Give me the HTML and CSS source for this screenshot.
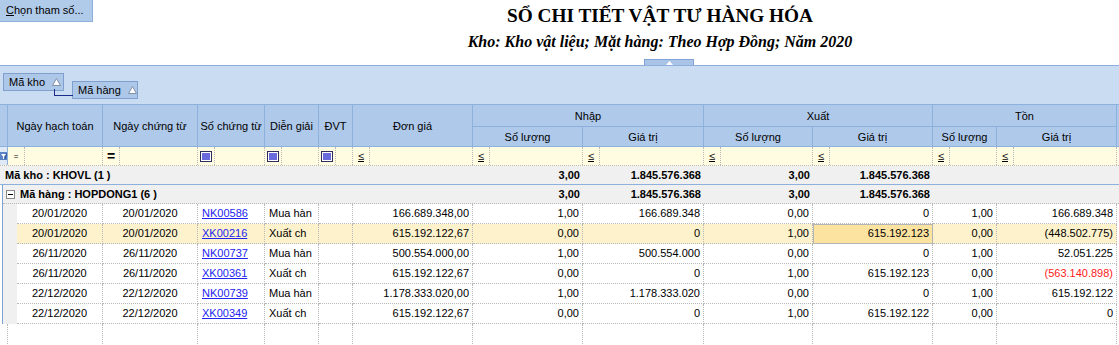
FILE: index.html
```html
<!DOCTYPE html>
<html lang="vi">
<head>
<meta charset="utf-8">
<title>Sổ chi tiết vật tư hàng hóa</title>
<link rel="stylesheet" href="styles.css">
</head>
<body>
<div class="top">
  <button class="btn-param"><u>C</u>họn tham số...</button>
  <div class="titles">
    <div class="title">SỔ CHI TIẾT VẬT TƯ HÀNG HÓA</div>
    <div class="subtitle">Kho: Kho vật liệu; Mặt hàng: Theo Hợp Đồng; Năm 2020</div>
  </div>
</div>
<div class="splitter-row">
  <div class="splitter"><svg width="7" height="4" viewBox="0 0 7 4"><polygon points="3.5,0 7,4 0,4" fill="#ffffff"/></svg></div>
</div>
<div class="group-panel">
  <div class="gbox gbox-kho">Mã kho <svg class="tri" width="9" height="8" viewBox="0 0 9 8"><polygon points="4.5,0.5 8.5,7.5 0.5,7.5" fill="#ffffff" stroke="#8090a8"/></svg></div>
  <div class="gbox gbox-hang">Mã hàng <svg class="tri" width="9" height="8" viewBox="0 0 9 8"><polygon points="4.5,0.5 8.5,7.5 0.5,7.5" fill="#ffffff" stroke="#8090a8"/></svg></div>
</div>
<div class="grid">
  <div class="header">
    <div class="hc span-r"></div>
    <div class="hc span-r">Ngày hạch toán</div>
    <div class="hc span-r">Ngày chứng từ</div>
    <div class="hc span-r">Số chứng từ</div>
    <div class="hc span-r">Diễn giải</div>
    <div class="hc span-r">ĐVT</div>
    <div class="hc span-r">Đơn giá</div>
    <div class="hc span-c">Nhập</div>
    <div class="hc span-c">Xuất</div>
    <div class="hc span-c">Tồn</div>
    <div class="hc span-r hc-rest"></div>
    <div class="hc">Số lượng</div>
    <div class="hc">Giá trị</div>
    <div class="hc">Số lượng</div>
    <div class="hc">Giá trị</div>
    <div class="hc">Số lượng</div>
    <div class="hc">Giá trị</div>
  </div>
  <div class="filter">
    <div class="fc f-ind"><svg width="7" height="10" viewBox="0 0 7 10"><rect x="0" y="1" width="7" height="8" fill="#5a83c6"/><path d="M1 3 L6 3 L4 5.5 L4 8 L3 8 L3 5.5 Z" fill="#ffffff"/><path d="M5 8 L7 2" stroke="#2c4f8f" stroke-width="1"/></svg></div>
    <div class="fc w1"><span class="op op-small">=</span></div>
    <div class="fc w2"><span class="op op-big">=</span></div>
    <div class="fc w3"><span class="op"><span class="chk"></span></span></div>
    <div class="fc w4"><span class="op"><span class="chk"></span></span></div>
    <div class="fc w5"><span class="op"><span class="chk"></span></span></div>
    <div class="fc w6"><span class="op"><u>≤</u></span></div>
    <div class="fc w7"><span class="op"><u>≤</u></span></div>
    <div class="fc w8"><span class="op"><u>≤</u></span></div>
    <div class="fc w9"><span class="op"><u>≤</u></span></div>
    <div class="fc w10"><span class="op"><u>≤</u></span></div>
    <div class="fc w11"><span class="op"><u>≤</u></span></div>
    <div class="fc w12"><span class="op"><u>≤</u></span></div>
  </div>
  <div class="grp grp-kho">
    <div class="glabel glabel-kho">Mã kho : KHOVL (1 )</div>
    <div class="gv w7">3,00</div>
    <div class="gv w8">1.845.576.368</div>
    <div class="gv w9">3,00</div>
    <div class="gv w10">1.845.576.368</div>
  </div>
  <div class="level2">
    <div class="grp grp-hang">
      <div class="glabel glabel-hang"><span class="expander"></span>Mã hàng : HOPDONG1 (6 )</div>
      <div class="gv w7">3,00</div>
      <div class="gv w8">1.845.576.368</div>
      <div class="gv w9">3,00</div>
      <div class="gv w10">1.845.576.368</div>
    </div>
    <div class="row">
      <div class="indent"></div>
      <div class="c w1d ctr">20/01/2020</div><div class="c w2 ctr">20/01/2020</div><div class="c w3"><a class="lnk">NK00586</a></div><div class="c w4">Mua hàn</div><div class="c w5"></div><div class="c w6 num">166.689.348,00</div><div class="c w7 num">1,00</div><div class="c w8 num">166.689.348</div><div class="c w9 num">0,00</div><div class="c w10 num">0</div><div class="c w11 num">1,00</div><div class="c w12 num">166.689.348</div>
    </div>
    <div class="row row-sel">
      <div class="indent"></div>
      <div class="c w1d ctr">20/01/2020</div><div class="c w2 ctr">20/01/2020</div><div class="c w3"><a class="lnk">XK00216</a></div><div class="c w4">Xuất ch</div><div class="c w5"></div><div class="c w6 num">615.192.122,67</div><div class="c w7 num">0,00</div><div class="c w8 num">0</div><div class="c w9 num">1,00</div><div class="c w10 num focus">615.192.123</div><div class="c w11 num">0,00</div><div class="c w12 num">(448.502.775)</div>
    </div>
    <div class="row">
      <div class="indent"></div>
      <div class="c w1d ctr">26/11/2020</div><div class="c w2 ctr">26/11/2020</div><div class="c w3"><a class="lnk">NK00737</a></div><div class="c w4">Mua hàn</div><div class="c w5"></div><div class="c w6 num">500.554.000,00</div><div class="c w7 num">1,00</div><div class="c w8 num">500.554.000</div><div class="c w9 num">0,00</div><div class="c w10 num">0</div><div class="c w11 num">1,00</div><div class="c w12 num">52.051.225</div>
    </div>
    <div class="row">
      <div class="indent"></div>
      <div class="c w1d ctr">26/11/2020</div><div class="c w2 ctr">26/11/2020</div><div class="c w3"><a class="lnk">XK00361</a></div><div class="c w4">Xuất ch</div><div class="c w5"></div><div class="c w6 num">615.192.122,67</div><div class="c w7 num">0,00</div><div class="c w8 num">0</div><div class="c w9 num">1,00</div><div class="c w10 num">615.192.123</div><div class="c w11 num">0,00</div><div class="c w12 num neg">(563.140.898)</div>
    </div>
    <div class="row">
      <div class="indent"></div>
      <div class="c w1d ctr">22/12/2020</div><div class="c w2 ctr">22/12/2020</div><div class="c w3"><a class="lnk">NK00739</a></div><div class="c w4">Mua hàn</div><div class="c w5"></div><div class="c w6 num">1.178.333.020,00</div><div class="c w7 num">1,00</div><div class="c w8 num">1.178.333.020</div><div class="c w9 num">0,00</div><div class="c w10 num">0</div><div class="c w11 num">1,00</div><div class="c w12 num">615.192.122</div>
    </div>
    <div class="row">
      <div class="indent"></div>
      <div class="c w1d ctr">22/12/2020</div><div class="c w2 ctr">22/12/2020</div><div class="c w3"><a class="lnk">XK00349</a></div><div class="c w4">Xuất ch</div><div class="c w5"></div><div class="c w6 num">615.192.122,67</div><div class="c w7 num">0,00</div><div class="c w8 num">0</div><div class="c w9 num">1,00</div><div class="c w10 num">615.192.122</div><div class="c w11 num">0,00</div><div class="c w12 num">0</div>
    </div>
  </div>
  <div class="filler">
    <div class="e e-ind"></div><div class="e w1"></div><div class="e w2"></div><div class="e w3"></div><div class="e w4"></div><div class="e w5"></div><div class="e w6"></div><div class="e w7"></div><div class="e w8"></div><div class="e w9"></div><div class="e w10"></div><div class="e w11"></div><div class="e w12"></div>
  </div>
</div>
</body>
</html>
```
FILE: styles.css
```css
* { box-sizing: border-box; }
html, body { margin: 0; padding: 0; }
body {
  width: 1119px;
  height: 345px;
  overflow: hidden;
  background: #ffffff;
  color: #000000;
  font-family: "Liberation Sans", Arial, sans-serif;
  font-size: 11px;
}

/* top area */
.top { display: flex; height: 59px; }
.btn-param {
  width: 93px;
  height: 22px;
  margin: 0;
  padding: 0 0 1px 6px;
  background: #b0caea;
  border: none;
  border-right: 1px solid #8eaedb;
  border-bottom: 1px solid #8eaedb;
  font-family: "Liberation Sans", Arial, sans-serif;
  font-size: 11px;
  color: #000;
  text-align: left;
  flex: none;
}
.titles {
  flex: 1;
  padding-left: 108px;
  text-align: center;
  font-family: "Liberation Serif", "Times New Roman", serif;
  font-weight: bold;
}
.title { font-size: 19.3px; line-height: 22px; margin-top: 5px; }
.subtitle { font-size: 16px; font-style: italic; line-height: 20px; margin-top: 5px; }

.splitter-row { display: flex; height: 6px; }
.splitter {
  margin-left: 644px;
  width: 50px;
  height: 6px;
  background: #a9c4e6;
  border: 1px solid #7fa3d6;
  border-bottom: none;
  display: flex;
  align-items: center;
  justify-content: center;
}
.splitter svg { display: block; }

/* group panel */
.group-panel {
  height: 39px;
  background: #c9dcf2;
  border-top: 1px solid #8eaedb;
  display: flex;
  align-items: flex-start;
  padding-left: 3px;
  gap: 8px;
}
.gbox {
  position: relative;
  height: 18px;
  background: #adc7e8;
  border: 1px solid #7fa0cf;
  display: flex;
  align-items: center;
  padding-left: 5px;
  white-space: nowrap;
}
.gbox .tri { margin-left: 7px; display: block; }
.gbox-kho { width: 61px; margin-top: 7px; }
.gbox-hang { width: 66px; margin-top: 15px; }
.gbox-hang::before {
  content: "";
  position: absolute;
  left: -19px;
  top: 7px;
  width: 18px;
  height: 6px;
  border-left: 1px solid #1d2c8c;
  border-bottom: 1px solid #1d2c8c;
}

/* header */
.header {
  display: grid;
  grid-template-columns: 8px 95px 95px 67px 54px 34px 120px 110px 121px 109px 120px 64px 120px 1fr;
  grid-template-rows: 22px 20px;
  background: #afc9ea;
  border-top: 1px solid #8db0dc;
}
.hc {
  border-right: 1px solid #8db0dc;
  border-bottom: 1px solid #8db0dc;
  display: flex;
  align-items: center;
  justify-content: center;
  white-space: nowrap;
  overflow: hidden;
}
.span-r { grid-row: span 2; }
.span-c { grid-column: span 2; }
.hc-rest { border-right: none; }

/* widths */
.w1 { width: 95px; }
.w1d { width: 86px; }
.w2 { width: 95px; }
.w3 { width: 67px; }
.w4 { width: 54px; }
.w5 { width: 34px; }
.w6 { width: 120px; }
.w7 { width: 110px; }
.w8 { width: 121px; }
.w9 { width: 109px; }
.w10 { width: 120px; }
.w11 { width: 64px; }
.w12 { width: 120px; }

/* filter row */
.filter {
  display: flex;
  height: 19px;
  background: #fffce2;
  border-bottom: 1px dotted #b8b8b8;
}
.fc {
  flex: none;
  height: 18px;
  border-right: 1px dotted #b8b8b8;
  display: flex;
  align-items: center;
}
.f-ind {
  width: 8px;
  background: #dfe9f6;
  border-right: 1px solid #8db0dc;
  justify-content: center;
}
.f-ind svg { display: block; }
.op {
  width: 17px;
  height: 18px;
  border-right: 1px dotted #b8b8b8;
  display: flex;
  align-items: center;
  justify-content: center;
}
.op u { text-decoration: underline; line-height: 1; }
.op-small { font-size: 8px; }
.op-big { font-size: 14px; font-weight: bold; }
.chk {
  width: 12px;
  height: 11px;
  border: 1px solid #2e2e5e;
  background: #ffffff;
  padding: 1px;
  display: block;
}
.chk::after {
  content: "";
  display: block;
  width: 100%;
  height: 100%;
  background: #6a6adc;
}

/* group rows */
.grp {
  display: flex;
  height: 19px;
  background: #f0f0f0;
  font-weight: bold;
  align-items: center;
}
.grp-kho { border-bottom: 1px solid #8db0dc; }
.grp-hang { border-bottom: 1px dotted #b8b8b8; }
.glabel { white-space: nowrap; display: flex; align-items: center; }
.glabel-kho { width: 473px; padding-left: 5px; }
.glabel-hang { width: 470px; padding-left: 3px; }
.expander {
  width: 9px;
  height: 9px;
  border: 1px solid #8a8a8a;
  background: #ffffff;
  margin-right: 5px;
  position: relative;
}
.expander::after {
  content: "";
  position: absolute;
  left: 1px;
  top: 3px;
  width: 5px;
  height: 1px;
  background: #000;
}
.gv { flex: none; text-align: right; padding-right: 3px; }

.level2 {
  margin-left: 2px;
  border-left: 1px solid #7fa3d6;
}

/* data rows */
.row {
  display: flex;
  height: 20px;
  background: #ffffff;
}
.indent { width: 14px; flex: none; background: #f0f0f0; }
.c {
  flex: none;
  height: 20px;
  border-right: 1px dotted #b8b8b8;
  border-bottom: 1px dotted #b8b8b8;
  padding: 0 3px 0 4px;
  line-height: 19px;
  white-space: nowrap;
  overflow: hidden;
}
.ctr { text-align: center; padding: 0; }
.num { text-align: right; }
.lnk { color: #2323f0; text-decoration: underline; }
.neg { color: #ff1a1a; }
.row-sel .c { background: #fdf2cc; }
.row-sel .c.focus { background: #fde3a0; border: 1px solid #b4b4b4; line-height: 17px; }

/* empty area */
.filler { display: flex; height: 30px; }
.e { flex: none; height: 30px; border-right: 1px dotted #b8b8b8; }
.e-ind { width: 8px; }
```
